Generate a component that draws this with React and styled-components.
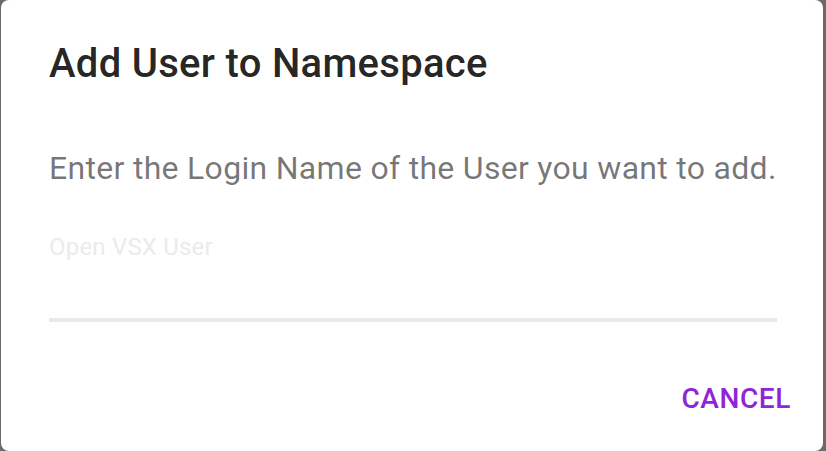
import React from "react";
import styled, { createGlobalStyle } from "styled-components";

const Global = createGlobalStyle`
  html, body { margin: 0; padding: 0; }
  body {
    background: #6b6b6b;
    font-family: Roboto, "Noto Sans", "Liberation Sans", sans-serif;
    width: 826px;
    height: 451px;
    overflow: hidden;
  }
`;

const Backdrop = styled.div`
  width: 826px;
  height: 451px;
  display: flex;
  padding-left: 1px;
  box-sizing: border-box;
`;

const Dialog = styled.div`
  width: 822px;
  height: 451px;
  background: #ffffff;
  border-radius: 8px;
  display: flex;
  flex-direction: column;
  box-sizing: border-box;
`;

const Title = styled.h2`
  margin: 0;
  padding: 32px 48px;
  font-size: 40px;
  font-weight: 500;
  line-height: 64px;
  letter-spacing: 0.3px;
  color: rgba(0, 0, 0, 0.87);
`;

const Content = styled.div`
  padding: 16px 46px 16px 48px;
  display: flex;
  flex-direction: column;
`;

const Text = styled.p`
  margin: 0 0 24px;
  font-size: 32px;
  line-height: 48px;
  letter-spacing: 0.3px;
  color: rgba(0, 0, 0, 0.54);
`;

const Field = styled.div`
  padding-top: 19px;
  display: flex;
  flex-direction: column;
`;

const Label = styled.label`
  font-size: 24px;
  line-height: 24px;
  height: 24px;
  letter-spacing: 0.2px;
  color: #ebebeb;
`;

const Input = styled.input`
  border: none;
  outline: none;
  padding: 0;
  margin: 0;
  font-family: inherit;
  font-size: 32px;
  height: 59px;
  background: transparent;
  color: rgba(0, 0, 0, 0.87);
`;

const Underline = styled.div`
  height: 4px;
  background: #e9e9e9;
`;

const Actions = styled.div`
  margin-top: auto;
  display: flex;
  justify-content: flex-end;
  padding: 16px;
`;

const Button = styled.button`
  border: none;
  background: transparent;
  padding: 12px 16px;
  font-family: inherit;
  font-size: 28px;
  font-weight: 500;
  letter-spacing: 0.6px;
  line-height: 49px;
  color: #8f24d9;
  text-transform: uppercase;
  cursor: pointer;
`;

export default function App() {
  return (
    <>
      <Global />
      <Backdrop>
        <Dialog>
          <Title>Add User to Namespace</Title>
          <Content>
            <Text>Enter the Login Name of the User you want to add.</Text>
            <Field>
              <Label htmlFor="user">Open VSX User</Label>
              <Input id="user" />
              <Underline />
            </Field>
          </Content>
          <Actions>
            <Button>Cancel</Button>
          </Actions>
        </Dialog>
      </Backdrop>
    </>
  );
}
